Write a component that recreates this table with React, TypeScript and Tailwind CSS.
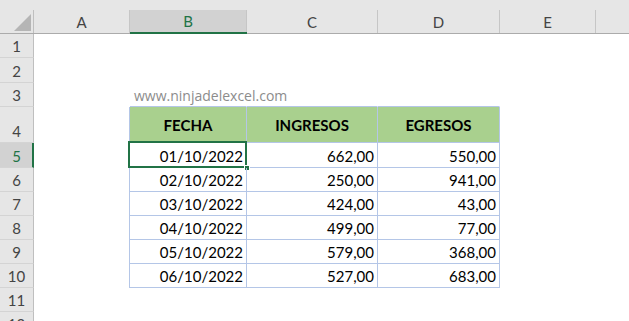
type Row = {
  n: number;
  h: string;
  cells?: [string, string, string];
};

const rows: Row[] = [
  { n: 1, h: "h-[24px]" },
  { n: 2, h: "h-[25px]" },
  { n: 3, h: "h-[24px]" },
  { n: 4, h: "h-[36px]", cells: ["FECHA", "INGRESOS", "EGRESOS"] },
  { n: 5, h: "h-[25px]", cells: ["01/10/2022", "662,00", "550,00"] },
  { n: 6, h: "h-[24px]", cells: ["02/10/2022", "250,00", "941,00"] },
  { n: 7, h: "h-[24px]", cells: ["03/10/2022", "424,00", "43,00"] },
  { n: 8, h: "h-[24px]", cells: ["04/10/2022", "499,00", "77,00"] },
  { n: 9, h: "h-[24px]", cells: ["05/10/2022", "579,00", "368,00"] },
  { n: 10, h: "h-[24px]", cells: ["06/10/2022", "527,00", "683,00"] },
  { n: 11, h: "h-[24px]" },
  { n: 12, h: "h-[24px]" },
];

const ColHeader = ({ label, w, selected }: { label: string; w: string; selected?: boolean }) => (
  <div
    className={`${w} h-full flex ${
      selected ? "bg-[#d2d2d2] border-b-2 border-[#217346] text-[#217346]" : "border-b border-[#ababab] text-[#444]"
    }`}
  >
    <div className="flex-1 flex items-center justify-center">{label}</div>
    <div className="w-px h-full bg-[#c6c6c6]" />
  </div>
);

const Header = () => (
  <div className="flex h-[34px] bg-[#e6e6e6]">
    {/* esquina */}
    <div className="w-[34px] h-[34px] flex border-b border-[#ababab]">
      <div className="flex-1 flex items-end justify-end pr-[2px] pb-[2px]">
        <svg width="17" height="17" viewBox="0 0 17 17">
          <polygon points="17,0 17,17 0,17" fill="#b5b5b5" />
        </svg>
      </div>
      <div className="w-px h-[23px] self-end bg-[#bfbfbf]" />
    </div>
    <div className="flex-1 flex flex-col">
      <div className="h-[10px]" />
      <div className="flex h-[24px]">
        <ColHeader label="A" w="w-[96px]" />
        <ColHeader label="B" w="w-[117px]" selected />
        <ColHeader label="C" w="w-[131px]" />
        <ColHeader label="D" w="w-[122px]" />
        <ColHeader label="E" w="w-[96px]" />
        <div className="flex-1 border-b border-[#ababab]" />
      </div>
    </div>
  </div>
);

const SheetRow = ({ row }: { row: Row }) => {
  const inTable = !!row.cells;
  const isHead = row.n === 4;
  const isSel = row.n === 5;
  const bottomTable = inTable || row.n === 3;
  const cellBorder = `border-r border-b ${inTable ? "border-r-[#b4c6e7]" : "border-r-transparent"} ${
    bottomTable ? "border-b-[#b4c6e7]" : "border-b-transparent"
  }`;
  const cellBg = isHead ? "bg-[#a9d08e]" : "";
  const align = isHead
    ? "items-center justify-center font-bold text-black"
    : "items-end justify-end pr-[3px] pb-[1px] text-black";

  return (
    <div className={`flex ${row.h}`}>
      <div
        className={`w-[34px] h-full flex items-end justify-center pb-[1px] border-b border-b-[#d4d4d4] ${
          isSel
            ? "bg-[#d2d2d2] border-r-2 border-r-[#217346] text-[#217346] pl-px"
            : "bg-[#e6e6e6] border-r border-r-[#bfbfbf] text-[#444]"
        }`}
      >
        {row.n}
      </div>
      {/* columna A */}
      <div
        className={`w-[96px] h-full border-r ${
          inTable ? "border-r-[#b4c6e7]" : "border-r-transparent"
        } ${isSel ? "-ml-px w-[97px]" : ""}`}
      />
      {/* columnas B, C, D */}
      <div className={`relative w-[117px] h-full flex ${cellBorder} ${cellBg} ${align}`}>
        {row.n === 3 && (
          <span className="absolute left-[4px] top-[6px] whitespace-nowrap font-['Open_Sans'] text-[14px] leading-none text-[#8c8c8c]">
            www.ninjadelexcel.com
          </span>
        )}
        {row.cells?.[0]}
        {isSel && (
          <>
            <div className="absolute -left-[2px] -top-[2px] -right-[1px] -bottom-[1px] border-2 border-[#217346]" />
            <div className="absolute -right-[4px] -bottom-[4px] w-[6px] h-[6px] bg-[#217346] border border-white" />
          </>
        )}
      </div>
      <div className={`w-[131px] h-full flex ${cellBorder} ${cellBg} ${align}`}>{row.cells?.[1]}</div>
      <div className={`w-[122px] h-full flex ${cellBorder} ${cellBg} ${align}`}>{row.cells?.[2]}</div>
      <div className="flex-1" />
    </div>
  );
};

export default function App() {
  return (
    <div className="w-[629px] h-[321px] overflow-hidden bg-white font-['Lato'] text-[15px] leading-[20px]">
      <Header />
      {rows.map((r) => (
        <SheetRow key={r.n} row={r} />
      ))}
    </div>
  );
}
